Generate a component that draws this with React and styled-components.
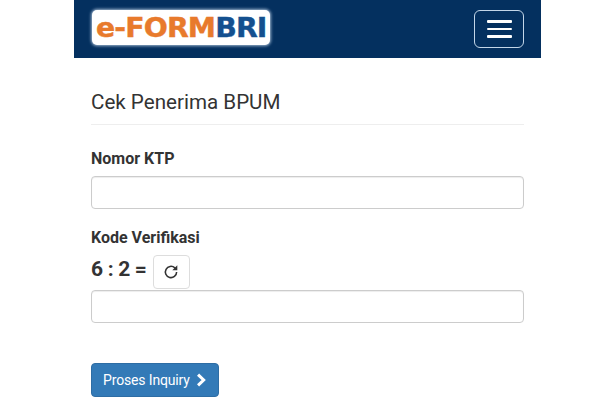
import styled, { createGlobalStyle } from "styled-components";

const GlobalStyle = createGlobalStyle`
  * {
    box-sizing: border-box;
  }
  html,
  body {
    margin: 0;
    background: #fff;
    font-family: Roboto, "Liberation Sans", sans-serif;
    color: #333;
  }
`;

const Page = styled.div`
  width: 467px;
  height: 400px;
  margin-left: 74px;
  overflow: hidden;
`;

const Navbar = styled.header`
  height: 58px;
  background: #04305f;
  display: flex;
  align-items: flex-start;
  justify-content: space-between;
  padding: 10px 17px 0 18px;
`;

const Logo = styled.div`
  width: 178px;
  height: 35px;
  background: #fff;
  border-radius: 5px;
  box-shadow: 0 0 3px 1px #9fb6cf;
  display: flex;
  align-items: center;
  justify-content: center;
`;

const LogoText = styled.span`
  font-family: "DejaVu Sans", sans-serif;
  font-weight: 700;
  font-size: 26px;
  line-height: 30px;
  letter-spacing: -0.8px;
  color: #e87a2c;
  white-space: nowrap;
  -webkit-text-stroke: 0.4px currentColor;
  transform: scaleX(1.09);
  span {
    color: #14508f;
  }
`;

const Toggle = styled.button`
  width: 50px;
  height: 38px;
  padding: 0;
  background: transparent;
  border: 1px solid #c3d6e8;
  border-radius: 6px;
  display: flex;
  flex-direction: column;
  align-items: center;
  justify-content: center;
  gap: 5px;
`;

const ToggleBar = styled.span`
  width: 25px;
  height: 2.5px;
  background: #fff;
  border-radius: 1px;
`;

const Content = styled.main`
  padding: 31px 17px 0;
`;

const Title = styled.h1`
  margin: 0;
  height: 36px;
  font-size: 20.6px;
  line-height: 26px;
  font-weight: 400;
  color: #333;
  border-bottom: 1px solid #eee;
`;

const Label = styled.label`
  display: block;
  font-size: 16px;
  line-height: 20px;
  font-weight: 700;
  color: #333;
  margin-top: ${(p) => p.$top}px;
`;

const Input = styled.input`
  display: block;
  width: 100%;
  height: 33px;
  margin-top: ${(p) => p.$top}px;
  border: 1px solid #ccc;
  border-radius: 4px;
  background: #fff;
  box-shadow: inset 0 1px 1px rgba(0, 0, 0, 0.075);
`;

const CaptchaRow = styled.div`
  display: flex;
  align-items: flex-start;
  gap: 6px;
  margin-top: 7px;
  height: 34px;
`;

const Captcha = styled.span`
  font-size: 21px;
  line-height: 28px;
  font-weight: 700;
  letter-spacing: -0.3px;
  color: #333;
  white-space: pre;
`;

const RefreshButton = styled.button`
  width: 37px;
  height: 34px;
  padding: 0;
  background: #fff;
  border: 1px solid #ddd;
  border-radius: 4px;
  display: flex;
  align-items: center;
  justify-content: center;
  color: #333;
`;

const SubmitButton = styled.button`
  display: flex;
  align-items: center;
  gap: 6px;
  width: 128px;
  height: 34px;
  margin-top: 40px;
  padding: 0 0 0 11px;
  background: #337ab7;
  border: 1px solid #2e6da4;
  border-radius: 4px;
  font-family: Roboto, "Liberation Sans", sans-serif;
  font-size: 14px;
  letter-spacing: -0.15px;
  color: #fff;
  white-space: nowrap;
`;

export default function App() {
  return (
    <Page>
      <GlobalStyle />
      <Navbar>
        <Logo>
          <LogoText>
            e-FORM<span>BRI</span>
          </LogoText>
        </Logo>
        <Toggle aria-label="Menu">
          <ToggleBar />
          <ToggleBar />
          <ToggleBar />
        </Toggle>
      </Navbar>
      <Content>
        <Title>Cek Penerima BPUM</Title>
        <Label $top={24}>Nomor KTP</Label>
        <Input $top={7} />
        <Label $top={19}>Kode Verifikasi</Label>
        <CaptchaRow>
          <Captcha>6 : 2 =</Captcha>
          <RefreshButton aria-label="Refresh">
            <svg width="18" height="18" viewBox="0 0 16 16" fill="none">
              <path
                d="M13 8a5 5 0 1 1-1.6-3.7L13 5.8"
                stroke="#333"
                strokeWidth="1.4"
              />
              <path d="M13.6 2v4.4H9.2z" fill="#333" />
            </svg>
          </RefreshButton>
        </CaptchaRow>
        <Input $top={1} />
        <SubmitButton>
          Proses Inquiry
          <svg width="11" height="14" viewBox="0 0 10 13">
            <path
              d="M1.8 1.5 7 6.5l-5.2 5"
              fill="none"
              stroke="#fff"
              strokeWidth="2.8"
            />
          </svg>
        </SubmitButton>
      </Content>
    </Page>
  );
}
